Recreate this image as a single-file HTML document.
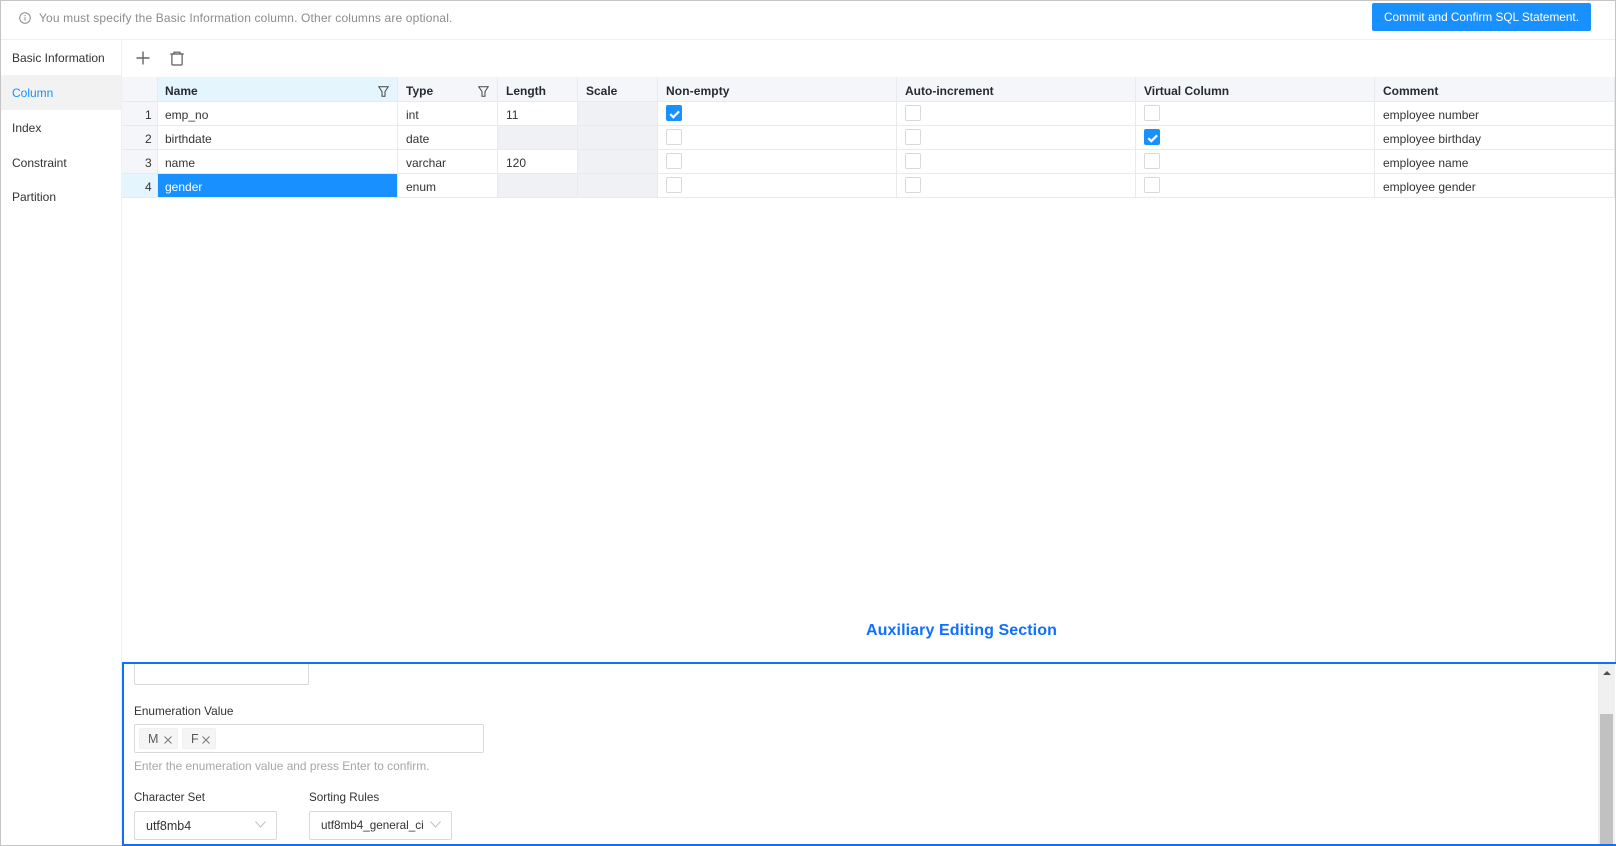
<!DOCTYPE html>
<html><head><meta charset="utf-8"><style>
*{box-sizing:border-box}
html,body{margin:0;padding:0;width:1616px;height:846px;overflow:hidden;background:#fff;font-family:"Liberation Sans",sans-serif;font-size:12px;color:#333}
.a{position:absolute}
.t{position:absolute;white-space:nowrap;line-height:16px}
.b{font-weight:700;color:#262a33}
.v{background:#e9eaee}
.cb{position:absolute;width:16px;height:16px;border:1px solid #d9d9d9;border-radius:2px;background:#fff}
.cb.on{background:#1890ff;border-color:#1890ff}
.cb svg{position:absolute;left:1px;top:1px}
</style></head><body>
<div class="a" style="left:0;top:0;width:1616px;height:846px;border:1px solid #c4c4c4;border-bottom:0"></div>
<div class="a" style="left:1px;top:39px;width:1614px;height:1px;background:#f0f0f0"></div>
<svg class="a" style="left:19px;top:12px" width="12" height="12" viewBox="0 0 12 12" fill="none" stroke="#8c8c8c"><circle cx="6" cy="6" r="5.3"/><path d="M6 5.2v3.6M6 3v1.2"/></svg>
<div class="t" style="left:39px;top:10px;color:#8c8c8c;letter-spacing:.15px">You must specify the Basic Information column. Other columns are optional.</div>
<div class="a" style="left:1372px;top:3px;width:219px;height:28px;background:#1890ff;border-radius:2px;color:#fff;text-align:center;line-height:29px;font-size:11.8px">Commit and Confirm SQL Statement.</div>

<div class="a" style="left:121px;top:40px;width:1px;height:806px;background:#f0f0f0"></div>
<div class="a" style="left:1px;top:75px;width:120px;height:35px;background:#f2f2f2"></div>
<div class="t" style="left:12px;top:50px">Basic Information</div>
<div class="t" style="left:12px;top:85px;color:#1890ff">Column</div>
<div class="t" style="left:12px;top:120px">Index</div>
<div class="t" style="left:12px;top:155px">Constraint</div>
<div class="t" style="left:12px;top:189px">Partition</div>

<svg class="a" style="left:136px;top:51px" width="14" height="14" viewBox="0 0 14 14" stroke="#666" stroke-width="1.4"><path d="M7 .5v13M.5 7h13"/></svg>
<svg class="a" style="left:170px;top:51px" width="14" height="15" viewBox="0 0 14 15" fill="none" stroke="#595959" stroke-width="1.2"><path d="M.3 3h13.4M4 3V1.2h6V3M1.9 3v10a1 1 0 0 0 1 1h8.2a1 1 0 0 0 1-1V3"/></svg>

<!-- table backgrounds -->
<div class="a" style="left:122px;top:77px;width:1493px;height:24px;background:#f5f6fa"></div>
<div class="a" style="left:157px;top:77px;width:240px;height:24px;background:#e5f5fd"></div>
<div class="a" style="left:122px;top:102px;width:35px;height:95px;background:#f5f6fa"></div>
<div class="a" style="left:122px;top:174px;width:35px;height:23px;background:#e5f5fd"></div>
<div class="a" style="left:157px;top:174px;width:240px;height:23px;background:#1890ff"></div>
<div class="a" style="left:497px;top:126px;width:81px;height:23px;background:#f0f1f4"></div>
<div class="a" style="left:497px;top:174px;width:81px;height:23px;background:#f0f1f4"></div>
<div class="a" style="left:578px;top:102px;width:80px;height:95px;background:#f0f1f4"></div>
<!-- row lines -->
<div class="a v" style="left:122px;top:101px;width:1493px;height:1px"></div>
<div class="a v" style="left:122px;top:125px;width:1493px;height:1px"></div>
<div class="a v" style="left:122px;top:149px;width:1493px;height:1px"></div>
<div class="a v" style="left:122px;top:173px;width:1493px;height:1px"></div>
<div class="a v" style="left:122px;top:197px;width:1493px;height:1px"></div>
<!-- col lines -->
<div class="a v" style="left:157px;top:77px;width:1px;height:120px"></div>
<div class="a v" style="left:397px;top:77px;width:1px;height:120px"></div>
<div class="a v" style="left:497px;top:77px;width:1px;height:120px"></div>
<div class="a v" style="left:577px;top:77px;width:1px;height:120px"></div>
<div class="a v" style="left:657px;top:77px;width:1px;height:120px"></div>
<div class="a v" style="left:896px;top:77px;width:1px;height:120px"></div>
<div class="a v" style="left:1135px;top:77px;width:1px;height:120px"></div>
<div class="a v" style="left:1374px;top:77px;width:1px;height:120px"></div>
<div class="a v" style="left:1614px;top:77px;width:1px;height:120px"></div>

<!-- header -->
<div class="t b" style="left:165px;top:83px">Name</div>
<svg class="a" style="left:378px;top:86px" width="11" height="11" viewBox="0 0 11 11" fill="none" stroke="#444"><path d="M.7.7h9.6L7 5.6v4.7H4V5.6z"/></svg>
<div class="t b" style="left:406px;top:83px">Type</div>
<svg class="a" style="left:478px;top:86px" width="11" height="11" viewBox="0 0 11 11" fill="none" stroke="#444"><path d="M.7.7h9.6L7 5.6v4.7H4V5.6z"/></svg>
<div class="t b" style="left:506px;top:83px">Length</div>
<div class="t b" style="left:586px;top:83px">Scale</div>
<div class="t b" style="left:666px;top:83px;letter-spacing:.1px">Non-empty</div>
<div class="t b" style="left:905px;top:83px">Auto-increment</div>
<div class="t b" style="left:1144px;top:83px">Virtual Column</div>
<div class="t b" style="left:1383px;top:83px">Comment</div>

<!-- rows -->
<div class="t" style="left:145px;top:107px">1</div>
<div class="t" style="left:145px;top:131px">2</div>
<div class="t" style="left:145px;top:155px">3</div>
<div class="t" style="left:145px;top:179px">4</div>
<div class="t" style="left:165px;top:107px">emp_no</div>
<div class="t" style="left:165px;top:131px">birthdate</div>
<div class="t" style="left:165px;top:155px">name</div>
<div class="t" style="left:165px;top:179px;color:#fff">gender</div>
<div class="t" style="left:406px;top:107px">int</div>
<div class="t" style="left:406px;top:131px">date</div>
<div class="t" style="left:406px;top:155px">varchar</div>
<div class="t" style="left:406px;top:179px">enum</div>
<div class="t" style="left:506px;top:107px">11</div>
<div class="t" style="left:506px;top:155px">120</div>
<div class="t" style="left:1383px;top:107px">employee number</div>
<div class="t" style="left:1383px;top:131px">employee birthday</div>
<div class="t" style="left:1383px;top:155px">employee name</div>
<div class="t" style="left:1383px;top:179px">employee gender</div>

<!-- checkboxes -->
<div class="cb on" style="left:666px;top:105px"><svg width="14" height="14" viewBox="0 0 14 14" fill="none" stroke="#fff" stroke-width="2.2"><path d="M2.3 7.2l3 3 5.8-5.8"/></svg></div>
<div class="cb" style="left:666px;top:129px"></div>
<div class="cb" style="left:666px;top:153px"></div>
<div class="cb" style="left:666px;top:177px"></div>
<div class="cb" style="left:905px;top:105px"></div>
<div class="cb" style="left:905px;top:129px"></div>
<div class="cb" style="left:905px;top:153px"></div>
<div class="cb" style="left:905px;top:177px"></div>
<div class="cb" style="left:1144px;top:105px"></div>
<div class="cb on" style="left:1144px;top:129px"><svg width="14" height="14" viewBox="0 0 14 14" fill="none" stroke="#fff" stroke-width="2.2"><path d="M2.3 7.2l3 3 5.8-5.8"/></svg></div>
<div class="cb" style="left:1144px;top:153px"></div>
<div class="cb" style="left:1144px;top:177px"></div>

<div class="t" style="left:866px;top:621px;font-size:16px;line-height:20px;font-weight:700;color:#0f6fff;letter-spacing:.1px">Auxiliary Editing Section</div>

<!-- bottom panel -->
<div class="a" style="left:122px;top:662px;width:1494px;height:184px;border:2px solid #0f6fff;border-right:0;border-bottom:0;overflow:hidden;background:#fff"></div>
<div class="a" style="left:122px;top:844px;width:1494px;height:2px;background:#0f6fff"></div>
<div class="a" style="left:0;top:845px;width:122px;height:1px;background:#c4c4c4"></div>
<div class="a" style="left:1598px;top:664px;width:17px;height:180px;background:#f0f0f0"></div>
<div class="a" style="left:1600px;top:714px;width:13px;height:130px;background:#c1c1c1"></div>
<div class="a" style="left:1603px;top:671px;width:0;height:0;border-left:4px solid transparent;border-right:4px solid transparent;border-bottom:4px solid #505050"></div>

<div class="a" style="left:134px;top:664px;width:175px;height:21px;border:1px solid #d9d9d9;border-top:0;border-radius:0 0 2px 2px"></div>
<div class="t" style="left:134px;top:703px;font-size:11.8px">Enumeration Value</div>
<div class="a" style="left:134px;top:724px;width:350px;height:29px;border:1px solid #d9d9d9;border-radius:2px"></div>
<div class="a" style="left:139px;top:728px;width:39px;height:21px;background:#f5f5f5;border:1px solid #f0f0f0;border-radius:2px"></div>
<div class="t" style="left:148px;top:731px;color:#595959;font-size:12.5px">M</div>
<svg class="a" style="left:164px;top:736px" width="8" height="8" viewBox="0 0 8 8" stroke="#777"><path d="M.5.5l7 7M7.5.5l-7 7"/></svg>
<div class="a" style="left:182px;top:728px;width:34px;height:21px;background:#f5f5f5;border:1px solid #f0f0f0;border-radius:2px"></div>
<div class="t" style="left:191px;top:731px;color:#595959;font-size:12.5px">F</div>
<svg class="a" style="left:202px;top:736px" width="8" height="8" viewBox="0 0 8 8" stroke="#777"><path d="M.5.5l7 7M7.5.5l-7 7"/></svg>
<div class="t" style="left:134px;top:758px;color:#a6a6a6;font-size:11.9px">Enter the enumeration value and press Enter to confirm.</div>
<div class="t" style="left:134px;top:790px;font-size:11.5px">Character Set</div>
<div class="t" style="left:309px;top:790px;font-size:11.7px">Sorting Rules</div>
<div class="a" style="left:134px;top:811px;width:143px;height:29px;border:1px solid #d9d9d9;border-radius:2px"></div>
<div class="t" style="left:146px;top:818px;font-size:12.5px">utf8mb4</div>
<svg class="a" style="left:255px;top:821px" width="11" height="7" viewBox="0 0 11 7" fill="none" stroke="#bfbfbf"><path d="M.5.5l5 5.5 5-5.5"/></svg>
<div class="a" style="left:309px;top:811px;width:143px;height:29px;border:1px solid #d9d9d9;border-radius:2px"></div>
<div class="t" style="left:321px;top:818px;font-size:11.7px">utf8mb4_general_ci</div>
<svg class="a" style="left:430px;top:821px" width="11" height="7" viewBox="0 0 11 7" fill="none" stroke="#bfbfbf"><path d="M.5.5l5 5.5 5-5.5"/></svg>
</body></html>
